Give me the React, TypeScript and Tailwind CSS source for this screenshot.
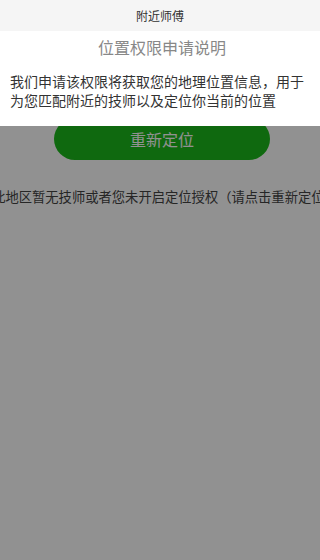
export default function App() {
  return (
    <main
      className="relative h-[560px] w-[320px] overflow-hidden bg-white"
      style={{ fontFamily: '"Noto Sans CJK SC", "Liberation Sans", sans-serif' }}
    >
      <header className="flex h-[31px] items-center justify-center bg-[#f5f5f5] text-[12px] text-[#333]">
        附近师傅
      </header>
      <section className="relative h-[529px] overflow-hidden">
        <div className="pt-[87px]">
          <button
            type="button"
            className="ml-[54px] flex h-[42px] w-[216px] items-center justify-center rounded-full bg-[#1cb91b] text-[16px] text-white"
          >
            重新定位
          </button>
          <div className="mt-[27px] flex justify-center overflow-hidden pl-[10px]">
            <p className="whitespace-nowrap text-[13.3px] leading-5 text-[#444]">
              此地区暂无技师或者您未开启定位授权（请点击重新定位）
            </p>
          </div>
        </div>
        <div className="absolute inset-0 bg-black/[0.43]" />
        <div className="absolute inset-x-0 top-0 bg-white px-[10px] pb-[16px] pt-[5px]">
          <h2 className="pl-[4px] text-center text-[16px] leading-[22px] text-[#888]">
            位置权限申请说明
          </h2>
          <p className="mt-[14px] text-[14px] leading-[19px] text-[#333]">
            我们申请该权限将获取您的地理位置信息，用于为您匹配附近的技师以及定位你当前的位置
          </p>
        </div>
      </section>
    </main>
  );
}
